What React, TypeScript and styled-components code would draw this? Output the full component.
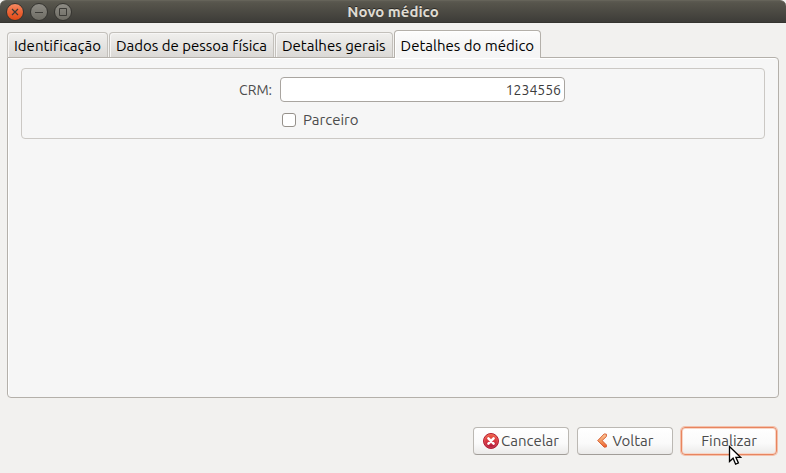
import React, { useState } from "react";
import styled, { createGlobalStyle, css } from "styled-components";

const GlobalStyle = createGlobalStyle`
  * { box-sizing: border-box; }
  body {
    margin: 0;
    background: #f1f0ee;
    color: #4c4c4c;
    font: 15px/20px Ubuntu, "Noto Sans", sans-serif;
    font-variant-ligatures: none;
  }
  button, input { font: inherit; font-variant-ligatures: none; color: inherit; margin: 0; }
`;

const Window = styled.div`
  display: flex;
  flex-direction: column;
  min-height: 100vh;
  background: #f2f1ef;
`;

const TitleBar = styled.header`
  display: grid;
  grid-template-columns: 1fr auto 1fr;
  align-items: center;
  height: 23px;
  padding: 0 6px;
  background: linear-gradient(#5c5a52 0, #57554c 2px, #3d3c38 100%);
  border-top: 1px solid #656359;
  border-bottom: 1px solid #353430;
  border-radius: 6px 6px 0 0;
`;

const WindowControls = styled.div`
  display: flex;
  gap: 6px;
`;

const WindowButton = styled.button<{ $close?: boolean }>`
  display: flex;
  width: 18px;
  height: 18px;
  padding: 0;
  border: 1px solid #353430;
  border-radius: 50%;
  color: #3c3b37;
  background: ${(p) =>
    p.$close
      ? "linear-gradient(#f58a62, #ec6436 50%, #df4a17)"
      : "linear-gradient(#8d8b84, #6e6c64)"};

  svg { display: block; width: 16px; height: 16px; }
`;

const Title = styled.h1`
  margin: 0;
  font-size: 15px;
  line-height: 20px;
  font-weight: 700;
  color: #dfdbd2;
  text-shadow: 0 -1px 0 #2b2a27;
`;

const Content = styled.main`
  flex: 1;
  display: flex;
  flex-direction: column;
  padding: 7px 7px 0;
`;

const TabList = styled.div`
  display: flex;
  align-items: flex-end;
  gap: 1px;
`;

const Tab = styled.button<{ $active: boolean }>`
  height: 25px;
  padding: 2px 6px 0;
  border: 1px solid #c3c0bb;
  border-bottom: 0;
  border-radius: 4px 4px 0 0;
  color: #000;
  line-height: 20px;
  white-space: nowrap;
  background: linear-gradient(#f0efed, #dbd9d6);
  box-shadow: inset 1px 1px 0 #f7f6f5;

  ${(p) =>
    p.$active &&
    css`
      position: relative;
      height: 28px;
      margin-bottom: -1px;
      border-color: #b4b0aa;
      background: linear-gradient(#fdfdfd, #f5f5f5 60%);
      box-shadow: inset 1px 1px 0 #fff;
    `}
`;

const Panel = styled.section`
  flex: 1;
  padding: 10px 13px;
  border: 1px solid #b4b0aa;
  border-radius: 0 4px 4px 4px;
  background: #f6f6f6;
  box-shadow: inset 1px 1px 0 #fff;
`;

const Form = styled.form`
  display: grid;
  grid-template-columns: 250fr 285px 191fr;
  align-items: center;
  gap: 8px;
  padding: 8px 0;
  border: 1px solid #cbc8c4;
  border-radius: 4px;
`;

const FieldLabel = styled.label`
  font-size: 14px;
  text-align: right;
`;

const TextInput = styled.input`
  width: 100%;
  height: 25px;
  padding: 0 3px;
  border: 1px solid #a9a5a0;
  border-radius: 4px;
  background: #fff;
  color: #3c3c3c;
  font-size: 14px;
  text-align: right;
  outline: 0;
`;

const CheckLabel = styled.label`
  grid-column: 2;
  display: flex;
  align-items: center;
  gap: 7px;
  padding-left: 2px;
`;

const CheckBox = styled.input`
  appearance: none;
  width: 14px;
  height: 14px;
  border: 1px solid #96918b;
  border-radius: 3px;
  background: #fff;

  &:checked { background: #f07746; }
`;

const Actions = styled.footer`
  display: flex;
  justify-content: flex-end;
  gap: 8px;
  padding: 29px 9px 18px;
`;

const ActionButton = styled.button<{ $primary?: boolean; $gap?: number }>`
  position: relative;
  display: flex;
  align-items: center;
  justify-content: center;
  gap: ${(p) => p.$gap ?? 2}px;
  min-width: 96px;
  height: 28px;
  padding: 0 8px;
  border: 1px solid #bbb8b3;
  border-bottom-color: #a19d98;
  border-radius: 4px;
  background: linear-gradient(#fff, #fafafa 60%, #ebeae9);
  white-space: nowrap;

  ${(p) =>
    p.$primary &&
    css`
      border-color: #e8855f;
      box-shadow: 0 0 0 1px #f3c1ac, inset 0 0 0 1px #f8d5c6;
    `}
`;

const Pointer = styled.svg`
  position: absolute;
  top: 17px;
  left: 46px;
  width: 14px;
  height: 21px;
  pointer-events: none;
`;

const CancelIcon = () => (
  <svg width="16" height="16" viewBox="0 0 16 16" aria-hidden="true">
    <defs>
      <linearGradient id="cancel-fill" x2="0" y2="1">
        <stop stopColor="#ef6546" />
        <stop offset=".5" stopColor="#d93640" />
        <stop offset="1" stopColor="#a5123c" />
      </linearGradient>
    </defs>
    <circle cx="8" cy="8" r="7.5" fill="url(#cancel-fill)" stroke="#b51d35" />
    <circle cx="8" cy="8" r="6.4" fill="none" stroke="#f18a79" strokeOpacity=".5" strokeWidth=".7" />
    <path d="M5.4 5.4l5.2 5.2M10.6 5.4l-5.2 5.2" stroke="#fff" strokeWidth="2.5" strokeLinecap="round" />
  </svg>
);

const BackIcon = () => (
  <svg width="10" height="16" viewBox="0 0 10 16" aria-hidden="true">
    <defs>
      <linearGradient id="back-fill" x2="0" y2="1">
        <stop stopColor="#fbc79a" />
        <stop offset=".55" stopColor="#f3995f" />
        <stop offset="1" stopColor="#ed5f2f" />
      </linearGradient>
    </defs>
    <path
      d="M7.2 .9L.7 7.6l6.5 6.6 2.2-.3v-2L5.1 7.6l4.3-4.1V1.2z"
      fill="url(#back-fill)"
      stroke="#d55427"
      strokeWidth=".9"
      strokeLinejoin="round"
    />
  </svg>
);

const tabs = [
  "Identificação",
  "Dados de pessoa física",
  "Detalhes gerais",
  "Detalhes do médico",
];

export default function App() {
  const [active, setActive] = useState(3);
  const [crm, setCrm] = useState("1234556");

  return (
    <>
      <GlobalStyle />
      <Window>
        <TitleBar>
          <WindowControls>
            <WindowButton $close aria-label="Fechar">
              <svg viewBox="0 0 16 16" fill="none" stroke="currentColor" strokeWidth="1.2">
                <path d="M5 5l6 6M11 5l-6 6" />
              </svg>
            </WindowButton>
            <WindowButton aria-label="Minimizar">
              <svg viewBox="0 0 16 16" fill="none" stroke="currentColor">
                <path d="M4 8.5h8" />
              </svg>
            </WindowButton>
            <WindowButton aria-label="Maximizar">
              <svg viewBox="0 0 16 16" fill="none" stroke="currentColor">
                <path d="M4.5 4.5h7v7h-7z" />
              </svg>
            </WindowButton>
          </WindowControls>
          <Title>Novo médico</Title>
        </TitleBar>
        <Content>
          <TabList role="tablist">
            {tabs.map((name, i) => (
              <Tab
                key={name}
                role="tab"
                aria-selected={active === i}
                $active={active === i}
                onClick={() => setActive(i)}
              >
                {name}
              </Tab>
            ))}
          </TabList>
          <Panel role="tabpanel">
            <Form onSubmit={(e) => e.preventDefault()}>
              <FieldLabel htmlFor="crm">CRM:</FieldLabel>
              <TextInput id="crm" value={crm} onChange={(e) => setCrm(e.target.value)} />
              <CheckLabel htmlFor="partner">
                <CheckBox id="partner" type="checkbox" />
                Parceiro
              </CheckLabel>
            </Form>
          </Panel>
        </Content>
        <Actions>
          <ActionButton>
            <CancelIcon />
            Cancelar
          </ActionButton>
          <ActionButton $gap={6}>
            <BackIcon />
            Voltar
          </ActionButton>
          <ActionButton $primary>
            Finalizar
            <Pointer viewBox="0 0 14 21" aria-hidden="true">
              <path
                d="M1.5 1.5v15l3.6-3.3 2.5 6 2.8-1.2-2.5-5.7h4.6z"
                fill="#fff"
                stroke="#000"
                strokeWidth="1.3"
              />
            </Pointer>
          </ActionButton>
        </Actions>
      </Window>
    </>
  );
}
